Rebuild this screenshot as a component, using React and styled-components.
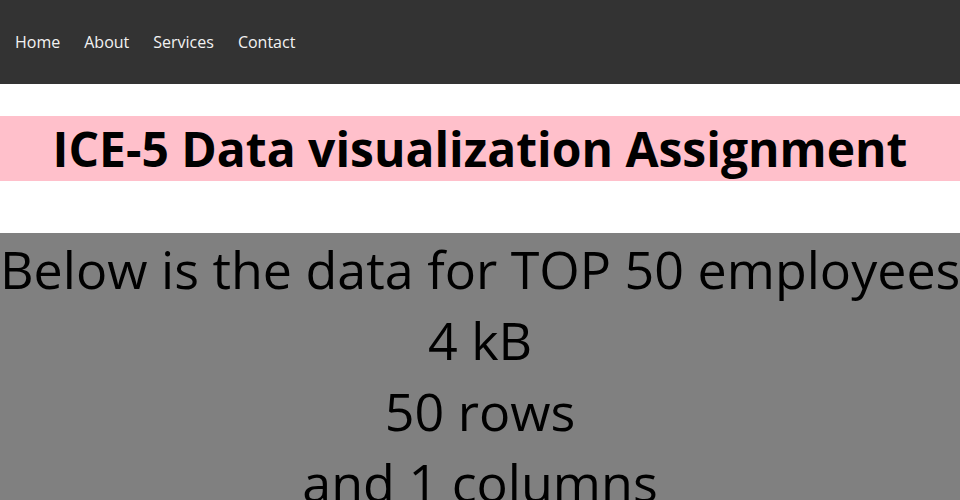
import styled, { createGlobalStyle } from 'styled-components';

const GlobalStyle = createGlobalStyle`
  body {
    margin: 0;
    font-family: 'Open Sans', sans-serif;
    background: #fff;
  }
`;

const Nav = styled.nav`
  display: flex;
  align-items: center;
  height: 84px;
  padding-left: 3px;
  background: #333;
`;

const NavLink = styled.a`
  padding: 0 12px;
  color: #f2f2f2;
  font-size: 16px;
  text-decoration: none;
`;

const Title = styled.h1`
  margin: 32px 0;
  background: pink;
  color: #000;
  font-size: 48px;
  font-weight: 700;
  text-align: center;
`;

const Info = styled.section`
  margin-top: 52px;
  background: grey;
  color: #000;
  font-size: 52px;
  text-align: center;
  white-space: nowrap;
`;

const Line = styled.div``;

const App = () => {
  const links = ['Home', 'About', 'Services', 'Contact'];
  return (
    <>
      <GlobalStyle />
      <Nav>
        {links.map(l => (
          <NavLink key={l} href="#">{l}</NavLink>
        ))}
      </Nav>
      <Title>ICE-5 Data visualization Assignment</Title>
      <Info>
        <Line>Below is the data for TOP 50 employees</Line>
        <Line>4 kB</Line>
        <Line>50 rows</Line>
        <Line>and 1 columns</Line>
      </Info>
    </>
  );
};

export default App;
